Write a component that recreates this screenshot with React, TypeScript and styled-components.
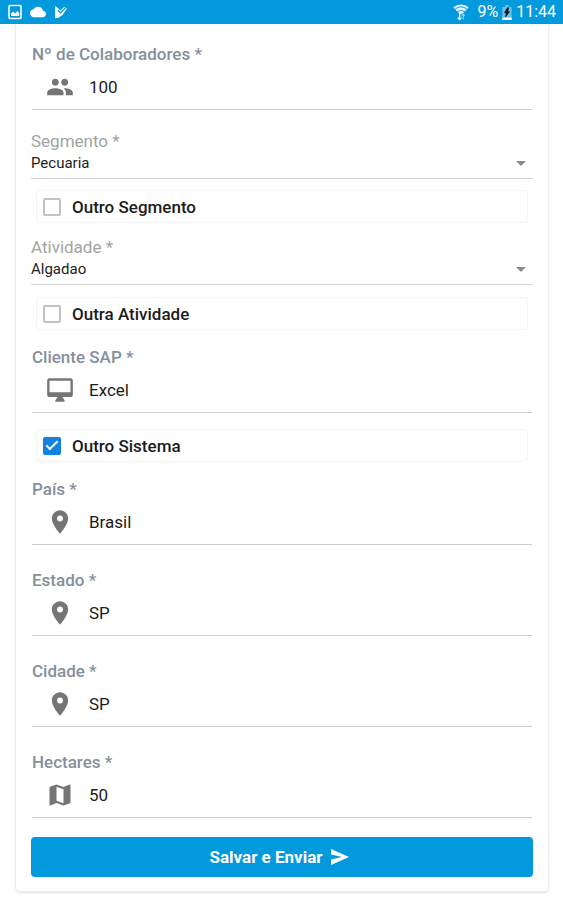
import React, { useId, useState } from "react";
import styled, { createGlobalStyle } from "styled-components";
import {
  MdPeople,
  MdPlace,
  MdMap,
  MdCloud,
  MdArrowDropDown,
} from "react-icons/md";

const GlobalStyle = createGlobalStyle`
  *, *::before, *::after { box-sizing: border-box; }
  body {
    margin: 0;
    background: #fff;
    color: #1c1c1c;
    font-family: Roboto, "Liberation Sans", sans-serif;
    font-size: 17px;
  }
  input, select, button { font: inherit; color: inherit; }
`;

const StatusBar = styled.header`
  display: flex;
  align-items: center;
  justify-content: space-between;
  height: 24px;
  padding: 0 7px 0 8px;
  background: #0299dd;
  color: #fff;
`;

const StatusGroup = styled.div<{ $gap: number }>`
  display: flex;
  align-items: center;
  gap: ${(p) => p.$gap}px;
  font-size: 16px;
  line-height: 24px;
`;

const BatteryLevel = styled.span`
  margin-left: 4px;
`;

const Card = styled.form`
  margin: 0 14px 8px 15px;
  padding: 20px 15px 14px;
  border: 1px solid #ebedee;
  border-top: 0;
  border-radius: 0 0 5px 5px;
  box-shadow: 0 1px 2px rgba(0, 0, 0, 0.12);
`;

const Field = styled.div<{ $gap: number }>`
  margin: 0 1px ${(p) => p.$gap}px;
`;

const FieldLabel = styled.label`
  display: block;
  font-weight: 500;
  line-height: 20px;
  color: #84909b;
`;

const InputRow = styled.div`
  display: flex;
  align-items: center;
  height: 46px;
  padding-left: 14px;
  border-bottom: 1px solid #cbcdce;
  color: #757575;
`;

const TextInput = styled.input`
  flex: 1;
  min-width: 0;
  margin-left: 15px;
  padding: 0;
  border: 0;
  outline: 0;
  background: transparent;
  line-height: 20px;
  color: #1c1c1c;
`;

const SelectLabel = styled.label`
  display: block;
  line-height: 20px;
  color: #a3a3a3;
`;

const SelectRow = styled.div`
  display: grid;
  align-items: center;
  height: 28px;
  padding-bottom: 3px;
  border-bottom: 1px solid #d3d3d3;

  & > * { grid-area: 1 / 1; }
  & > svg { justify-self: end; pointer-events: none; color: #8a8a8a; }
`;

const Select = styled.select`
  width: 100%;
  height: 24px;
  padding: 0;
  border: 0;
  outline: 0;
  appearance: none;
  background: transparent;
  font-size: 15px;
`;

const CheckRow = styled.label<{ $top: number; $bottom: number }>`
  display: flex;
  align-items: center;
  gap: 11px;
  height: 33px;
  margin: ${(p) => p.$top}px 5px ${(p) => p.$bottom}px;
  padding: 0 6px;
  border: 1px solid #f3f4f5;
  border-radius: 4px;
  font-weight: 500;
`;

const CheckBox = styled.input`
  display: grid;
  place-items: center;
  width: 18px;
  height: 18px;
  margin: 0;
  appearance: none;
  border: 2px solid #c2c2c2;
  border-radius: 2px;
  background: #fff;

  &:checked { border-color: #1583dd; background: #1583dd; }
  &:checked::after {
    content: "";
    width: 12px;
    height: 6px;
    margin-top: -4px;
    border: solid #fff;
    border-width: 0 0 2px 2px;
    transform: rotate(-45deg);
  }
`;

const SubmitButton = styled.button`
  display: flex;
  align-items: center;
  justify-content: center;
  gap: 8px;
  width: 100%;
  height: 40px;
  margin-top: 19px;
  padding: 0 12px 0 6px;
  border: 0;
  border-radius: 4px;
  background: #0299dd;
  color: #fff;
  font-weight: 700;
`;

const GalleryIcon = () => (
  <svg width="14" height="16" viewBox="0 0 14 16" aria-hidden="true">
    <rect x="1" y="1.5" width="12" height="13" rx="1" fill="none" stroke="#fff" strokeWidth="1.6" />
    <path d="M3 12V9.5l2-2 2 2L9.5 7l1.700 2v3z" fill="#fff" />
  </svg>
);

const PlayCheckIcon = () => (
  <svg width="14" height="14" viewBox="0 0 14 14" aria-hidden="true">
    <path d="M1 1l3 2 2.500 2.500L10 2l3 1.500L8.500 10 4 13H1z" fill="#fff" />
    <path d="M4 5l2.500 2.800L11.500 3" fill="none" stroke="#0299dd" strokeWidth="1.200" />
  </svg>
);

const WifiIcon = () => (
  <svg width="16" height="18" viewBox="0 0 17 18" aria-hidden="true">
    <path d="M.5 4.500Q8.500-2 16.500 4.500L8.500 12z" fill="#fff" opacity=".75" />
    <path d="M1 4.500Q8.500-1 16 4.500M3.500 7.200q5-3.600 10 0M6 9.800q2.500-1.800 5 0" fill="none" stroke="#fff" strokeWidth="1.300" />
    <path d="M2 6q6.500-5 13 0M5 8.500q3.500-2.500 7 0" fill="none" stroke="#0299dd" strokeWidth=".8" />
    <path d="M7 10v7M5 15l2 2 2-2" fill="none" stroke="#fff" strokeWidth="1.400" />
    <path d="M11 17v-6M9.500 13l1.500-2 1.500 2" fill="none" stroke="#8fd0f0" strokeWidth="1.200" />
  </svg>
);

const BatteryIcon = () => (
  <svg width="10" height="15" viewBox="0 0 10 16" aria-hidden="true">
    <path d="M3 0h4v2h3v14H0V2h3z" fill="#6fbde4" />
    <path d="M0 13.500h10V16H0z" fill="#fff" />
    <path d="M5.500 3L2.500 8.200h2L3.500 12.500 7.500 7.200h-2L6.700 3z" fill="#0b1c28" stroke="#0b1c28" />
  </svg>
);

const MonitorIcon = () => (
  <svg width="28" height="28" viewBox="0 0 24 24" fill="currentColor" aria-hidden="true">
    <path d="M21 2H3c-1.100 0-2 .9-2 2v12c0 1.100.9 2 2 2h7l-2 3v1h8v-1l-2-3h7c1.100 0 2-.9 2-2V4c0-1.100-.9-2-2-2zm0 12H3V4h18v10z" />
  </svg>
);

const SendIcon = () => (
  <svg width="18" height="16" viewBox="0 0 18 16" fill="#fff" aria-hidden="true">
    <path d="M0 0l18 8L0 16v-5.500L11 8 0 5.500z" />
  </svg>
);

type TextFieldProps = {
  label: string;
  value: string;
  gap?: number;
  icon: React.ReactNode;
};

function TextField({ label, value, gap = 0, icon }: TextFieldProps) {
  const id = useId();
  return (
    <Field $gap={gap}>
      <FieldLabel htmlFor={id}>{label}</FieldLabel>
      <InputRow>
        {icon}
        <TextInput id={id} defaultValue={value} />
      </InputRow>
    </Field>
  );
}

function SelectField({ label, value }: { label: string; value: string }) {
  const id = useId();
  return (
    <div>
      <SelectLabel htmlFor={id}>{label}</SelectLabel>
      <SelectRow>
        <Select id={id} defaultValue={value}>
          <option>{value}</option>
        </Select>
        <MdArrowDropDown size={24} />
      </SelectRow>
    </div>
  );
}

type CheckFieldProps = { label: string; checked?: boolean; top: number; bottom: number };

function CheckField({ label, checked = false, top, bottom }: CheckFieldProps) {
  const [on, setOn] = useState(checked);
  return (
    <CheckRow $top={top} $bottom={bottom}>
      <CheckBox type="checkbox" checked={on} onChange={() => setOn(!on)} />
      {label}
    </CheckRow>
  );
}

export default function App() {
  return (
    <>
      <GlobalStyle />
      <StatusBar>
        <StatusGroup $gap={8}>
          <GalleryIcon />
          <MdCloud size={16} />
          <PlayCheckIcon />
        </StatusGroup>
        <StatusGroup $gap={4}>
          <WifiIcon />
          <BatteryLevel>9%</BatteryLevel>
          <BatteryIcon />
          <span>11:44</span>
        </StatusGroup>
      </StatusBar>
      <Card onSubmit={(e: React.FormEvent) => e.preventDefault()}>
        <TextField label="Nº de Colaboradores *" value="100" gap={21} icon={<MdPeople size={28} />} />
        <SelectField label="Segmento *" value="Pecuaria" />
        <CheckField label="Outro Segmento" top={11} bottom={14} />
        <SelectField label="Atividade *" value="Algadao" />
        <CheckField label="Outra Atividade" top={12} bottom={17} />
        <TextField label="Cliente SAP *" value="Excel" icon={<MonitorIcon />} />
        <CheckField label="Outro Sistema" checked top={16} bottom={17} />
        <TextField label="País *" value="Brasil" gap={25} icon={<MdPlace size={28} />} />
        <TextField label="Estado *" value="SP" gap={25} icon={<MdPlace size={28} />} />
        <TextField label="Cidade *" value="SP" gap={25} icon={<MdPlace size={28} />} />
        <TextField label="Hectares *" value="50" icon={<MdMap size={28} />} />
        <SubmitButton type="submit">
          Salvar e Enviar
          <SendIcon />
        </SubmitButton>
      </Card>
    </>
  );
}
